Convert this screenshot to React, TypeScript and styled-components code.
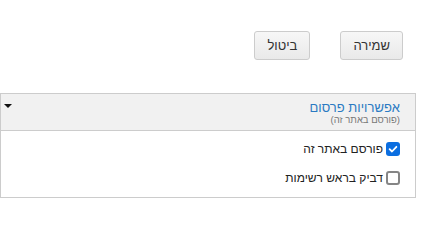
import React, { useState } from 'react';
import styled, { createGlobalStyle } from 'styled-components';

const GlobalStyle = createGlobalStyle`
  html, body {
    margin: 0;
    padding: 0;
    background: #fff;
    font-family: "Liberation Sans", Arial, sans-serif;
  }
`

const Page = styled.div`
  direction: rtl;
  width: 429px;
  padding: 31px 13px 0 0;
  box-sizing: border-box;
`

const Toolbar = styled.div`
  display: flex;
  gap: 30px;
  padding-right: 13px;
`

const Button = styled.button`
  height: 29px;
  padding: 0 12px;
  border: 1px solid #ccc;
  border-radius: 3px;
  background: linear-gradient(#f7f7f7, #e9e9e9);
  color: #333;
  font-family: inherit;
  font-size: 13px;
  cursor: pointer;
`

const Panel = styled.div`
  margin-top: 33px;
  border: 1px solid #ccc;
`

const Header = styled.div`
  display: flex;
  justify-content: space-between;
  align-items: flex-start;
  height: 37px;
  padding: 7px 15px 0 3px;
  box-sizing: border-box;
  background: #f1f1f1;
  border-bottom: 1px solid #ccc;
`

const Titles = styled.div`
  display: flex;
  flex-direction: column;
`

const Title = styled.div`
  color: #2a7ac2;
  font-size: 13px;
  line-height: 14px;
`

const Subtitle = styled.div`
  color: #777;
  font-size: 9.5px;
  line-height: 10px;
`

const Caret = styled.span`
  width: 0;
  height: 0;
  margin-top: 3px;
  border-left: 4px solid transparent;
  border-right: 4px solid transparent;
  border-top: 4px solid #111;
`

const Body = styled.div`
  display: flex;
  flex-direction: column;
  gap: 11px;
  padding: 9px 15px 10px;
`

const Option = styled.label`
  display: flex;
  align-items: center;
  gap: 3px;
  font-size: 12px;
  color: #222;
  line-height: 18px;
`

const Box = styled.span<{ $on: boolean }>`
  display: inline-flex;
  align-items: center;
  justify-content: center;
  width: 14px;
  height: 14px;
  box-sizing: border-box;
  border-radius: 3px;
  border: ${p => (p.$on ? 'none' : '2px solid #858585')};
  background: ${p => (p.$on ? '#0b6ee0' : '#fff')};
`

const HiddenInput = styled.input`
  display: none;
`

function Checkbox({ label, checked, onChange }: { label: string; checked: boolean; onChange: (v: boolean) => void }) {
  return (
    <Option>
      <HiddenInput type="checkbox" checked={checked} onChange={e => onChange(e.target.checked)} />
      <Box $on={checked}>
        {checked && (
          <svg width="10" height="10" viewBox="0 0 10 10">
            <path d="M1.6 5.2 L4 7.5 L8.4 2.8" fill="none" stroke="#fff" strokeWidth="1.8" strokeLinecap="round" strokeLinejoin="round" />
          </svg>
        )}
      </Box>
      {label}
    </Option>
  );
}

export default function App() {
  const [published, setPublished] = useState(true);
  const [pinned, setPinned] = useState(false);

  return (
    <Page>
      <GlobalStyle />
      <Toolbar>
        <Button>שמירה</Button>
        <Button>ביטול</Button>
      </Toolbar>
      <Panel>
        <Header>
          <Titles>
            <Title>אפשרויות פרסום</Title>
            <Subtitle>(פורסם באתר זה)</Subtitle>
          </Titles>
          <Caret />
        </Header>
        <Body>
          <Checkbox label="פורסם באתר זה" checked={published} onChange={setPublished} />
          <Checkbox label="דביק בראש רשימות" checked={pinned} onChange={setPinned} />
        </Body>
      </Panel>
    </Page>
  );
}
